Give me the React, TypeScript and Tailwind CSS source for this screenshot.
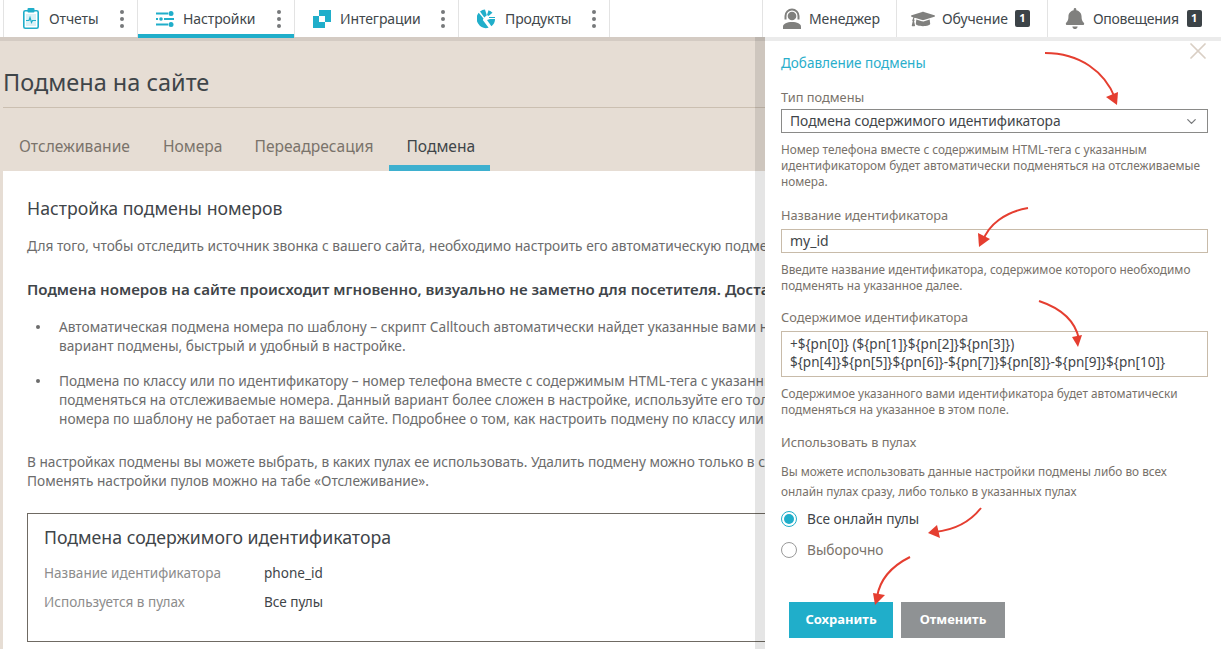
import React from 'react';
import { ChevronDown, X } from 'lucide-react';
import { FaBell, FaGraduationCap } from 'react-icons/fa';

const ReportIcon = () => (
  <svg width="16" height="21" viewBox="0 0 16 21" fill="none">
    <rect x="0.8" y="2.8" width="14.4" height="17.4" rx="1.5" stroke="#20aeca" strokeWidth="1.6" />
    <rect x="4.5" y="0" width="7" height="4.5" rx="1" fill="#20aeca" />
    <rect x="3" y="6" width="10" height="12" fill="#d9f1f6" />
    <path d="M3 12.5h3l1-3 1.500 5 1-2h3.500" stroke="#20aeca" strokeWidth="1.2" />
  </svg>
);

const SettingsIcon = () => (
  <svg width="18" height="16" viewBox="0 0 18 16" fill="#20aeca">
    <rect x="0" y="1.500" width="12" height="2" />
    <circle cx="15" cy="2.500" r="2.500" />
    <rect x="0" y="7" width="2" height="2" />
    <circle cx="5" cy="8" r="1.800" />
    <rect x="8" y="7" width="10" height="2" />
    <rect x="0" y="12.500" width="12" height="2" />
    <circle cx="15" cy="13.500" r="2.500" />
  </svg>
);

const IntegrationIcon = () => (
  <svg width="18" height="18" viewBox="0 0 18 18" fill="#20aeca">
    <path d="M6 0h12v12h-6V6H6z" />
    <path d="M0 6h6v6h6v6H0z" />
  </svg>
);

const ProductIcon = () => (
  <svg width="18" height="20" viewBox="0 0 18 20" fill="#20aeca">
    <path d="M3 2.500A9.500 9.500 0 0 1 8 .6l1.800 5.600-2.500 2.300z" />
    <path d="M1.700 3.800 6.500 9.400 5.800 11l5.800 7.800A9.500 9.500 0 0 1 1.700 3.800z" />
    <path d="M11.500 1.200a9 9 0 0 1 4 2.500l-4 3.300-1.500-1z" />
    <path d="M13 10h5a9 9 0 0 1-3.600 7.300L10 11z" />
    <rect x="12" y="8" width="6" height="1" />
  </svg>
);

const ManagerIcon = () => (
  <svg width="20" height="21" viewBox="0 0 20 21" fill="#80807e">
    <path d="M2.500 8a7.500 7.500 0 0 1 15 0v3.500h-2V8a5.500 5.500 0 0 0-11 0v3.500h-2z" />
    <circle cx="10" cy="8" r="4.300" />
    <path d="M1 21v-2.500C1 16 5 14 10 14s9 2 9 4.500V21z" />
  </svg>
);

const navLeft = [
  { label: 'Отчеты', width: 'w-[134px]', pad: 'pl-[19px]', gap: 'gap-[10px]', icon: <ReportIcon />, active: false },
  { label: 'Настройки', width: 'w-[157px]', pad: 'pl-[18px]', gap: 'gap-[9px]', icon: <SettingsIcon />, active: true },
  { label: 'Интеграции', width: 'w-[164px]', pad: 'pl-[18px]', gap: 'gap-[9px]', icon: <IntegrationIcon />, active: false },
  { label: 'Продукты', width: 'w-[151px]', pad: 'pl-[18px]', gap: 'gap-[10px]', icon: <ProductIcon />, active: false },
];

const NavDots = () => (
  <div className="ml-auto mr-[13px] flex flex-col gap-[3px]">
    <span className="h-[4px] w-[4px] rounded-full bg-[#77797b]" />
    <span className="h-[4px] w-[4px] rounded-full bg-[#77797b]" />
    <span className="h-[4px] w-[4px] rounded-full bg-[#77797b]" />
  </div>
);

const Badge = () => (
  <span className="flex h-[17px] w-[15px] items-center justify-center rounded-[2px] bg-[#3c4347] text-[11px] font-bold text-white">1</span>
);

const Navbar = () => (
  <nav className="flex h-[37px] bg-white text-[14px] text-[#41474b]">
    <div className="flex pl-[3px]">
      {navLeft.map((item) => (
        <div
          key={item.label}
          className={`relative flex items-center border-l border-[#e3e3e3] ${item.width} ${item.pad} ${item.gap}`}
        >
          {item.icon}
          <span className="tracking-[-0.1px]">{item.label}</span>
          <NavDots />
          {item.active && <span className="absolute bottom-[-1px] left-0 right-0 z-10 h-[4px] bg-[#20aeca]" />}
        </div>
      ))}
      <div className="border-l border-[#e3e3e3]" />
    </div>
    <div className="ml-auto flex">
      <div className="flex w-[134px] items-center gap-[7px] border-l border-[#e3e3e3] pl-[19px]">
        <ManagerIcon />
        <span className="tracking-[-0.1px]">Менеджер</span>
      </div>
      <div className="flex w-[151px] items-center gap-[7px] border-l border-[#e3e3e3] pl-[14px]">
        <FaGraduationCap className="h-[24px] w-[24px] text-[#80807e]" />
        <span className="tracking-[-0.1px]">Обучение</span>
        <Badge />
      </div>
      <div className="flex w-[174px] items-center gap-[8px] border-l border-[#e3e3e3] pl-[17px]">
        <FaBell className="h-[21px] w-[20px] text-[#80807e]" />
        <span className="tracking-[-0.3px]">Оповещения</span>
        <Badge />
      </div>
    </div>
  </nav>
);

const Bullet = () => (
  <span className="absolute left-[-23px] top-[8px] h-[4px] w-[4px] rounded-full bg-[#6c6c6c]" />
);

const PageContent = () => (
  <div className="relative w-[765px] shrink-0 overflow-hidden bg-[#e6ddd4]">
    <div className="ml-[3px]">
      <h1 className="mt-[29px] h-[41px] text-[23.5px] leading-[32px] text-[#3f4549]">Подмена на сайте</h1>
    </div>
    <div className="ml-[3px] border-t border-[#cbbfb1]" />
    <div className="ml-[3px] mt-[18px] flex h-[45px] text-[15.6px] text-[#7a736b]">
      <span className="ml-[16px] mt-[9px]">Отслеживание</span>
      <span className="ml-[33px] mt-[9px]">Номера</span>
      <span className="ml-[32px] mt-[9px]">Переадресация</span>
      <span className="relative ml-[16px] h-[45px] w-[101px] pl-[17px] pt-[9px] text-[#3f4549]">
        Подмена
        <span className="absolute bottom-0 left-0 right-0 h-[6px] bg-[#3eb0cf]" />
      </span>
    </div>
    <div className="ml-[3px] h-[500px] w-[1000px] bg-white pl-[24px] pt-[26px] text-[13.7px] leading-[19px] text-[#6c6c6c]">
      <h2 className="text-[17.7px] leading-[22px] text-[#3f4549]">Настройка подмены номеров</h2>
      <p className="mt-[17px] whitespace-nowrap">Для того, чтобы отследить источник звонка с вашего сайта, необходимо настроить его автоматическую подмену</p>
      <p className="mt-[25px] whitespace-nowrap text-[15.1px] font-semibold text-[#3f4549]">Подмена номеров на сайте происходит мгновенно, визуально не заметно для посетителя. Достаточно</p>
      <ul className="mt-[18px] pl-[32px]">
        <li className="relative whitespace-nowrap">
          <Bullet />
          Автоматическая подмена номера по шаблону – скрипт Calltouch автоматически найдет указанные вами номера<br />
          вариант подмены, быстрый и удобный в настройке.
        </li>
        <li className="relative mt-[16px] whitespace-nowrap">
          <Bullet />
          Подмена по классу или по идентификатору – номер телефона вместе с содержимым HTML-тега с указанным<br />
          подменяться на отслеживаемые номера. Данный вариант более сложен в настройке, используйте его только<br />
          номера по шаблону не работает на вашем сайте. Подробнее о том, как настроить подмену по классу или
        </li>
      </ul>
      <p className="mt-[24px] whitespace-nowrap">
        В настройках подмены вы можете выбрать, в каких пулах ее использовать. Удалить подмену можно только в случае<br />
        Поменять настройки пулов можно на табе «Отслеживание».
      </p>
      <div className="mt-[23px] h-[129px] w-[900px] border border-[#6f6a63] pl-[16px] pt-[12px]">
        <h3 className="text-[17.7px] leading-[22px] text-[#3f4549]">Подмена содержимого идентификатора</h3>
        <div className="mt-[16px] flex h-[29px] text-[13.55px]">
          <span className="w-[220px] text-[#8c8c8c]">Название идентификатора</span>
          <span className="text-[#3f4549]">phone_id</span>
        </div>
        <div className="flex text-[13.55px]">
          <span className="w-[220px] text-[#8c8c8c]">Используется в пулах</span>
          <span className="text-[#3f4549]">Все пулы</span>
        </div>
      </div>
    </div>
    <div className="absolute bottom-0 right-0 top-0 w-[10px] bg-black/10" />
  </div>
);

const Help = ({ children, className }: { children: React.ReactNode; className: string }) => (
  <p className={`text-[11.8px] leading-[16px] text-[#77716a] ${className}`}>{children}</p>
);

const Label = ({ children, className }: { children: React.ReactNode; className: string }) => (
  <div className={`text-[12.8px] leading-[18px] text-[#7a736b] ${className}`}>{children}</div>
);

const SidePanel = () => (
  <div className="relative flex-1 bg-white pl-[16px] pr-[13px]">
    <X className="absolute right-[9px] top-0 h-[28px] w-[28px] text-[#d9cfc4]" strokeWidth={1.5} />
    <div className="mt-[17px] text-[13.5px] leading-[18px] text-[#29aecb]">Добавление подмены</div>
    <Label className="mt-[16px]">Тип подмены</Label>
    <div className="mt-[3px] flex h-[24px] items-center justify-between border border-[#8a8a88] pl-[8px] pr-[8px] text-[13.8px] text-[#3f4549]">
      <span>Подмена содержимого идентификатора</span>
      <ChevronDown className="h-[15px] w-[15px] text-[#77797b]" />
    </div>
    <Help className="mt-[8px]">
      Номер телефона вместе с содержимым HTML-тега с указанным<br />
      идентификатором будет автоматически подменяться на отслеживаемые<br />
      номера.
    </Help>
    <Label className="mt-[17px]">Название идентификатора</Label>
    <div className="mt-[5px] flex h-[24px] items-center border border-[#c8bba9] pb-[2px] pl-[8px] text-[14px] text-[#3f4549]">my_id</div>
    <Help className="mt-[8px]">
      Введите название идентификатора, содержимое которого необходимо<br />
      подменять на указанное далее.
    </Help>
    <Label className="mt-[15px]">Содержимое идентификатора</Label>
    <div className="mt-[5px] h-[46px] border border-[#c8bba9] pl-[8px] pt-[3px] text-[13.5px] leading-[18px] text-[#3f4549]">
      {'+${pn[0]} (${pn[1]}${pn[2]}${pn[3]})'}<br />
      {'${pn[4]}${pn[5]}${pn[6]}-${pn[7]}${pn[8]}-${pn[9]}${pn[10]}'}
    </div>
    <Help className="mt-[8px]">
      Содержимое указанного вами идентификатора будет автоматически<br />
      подменяться на указанное в этом поле.
    </Help>
    <Label className="mt-[16px]">Использовать в пулах</Label>
    <p className="mt-[10px] text-[11.8px] leading-[20px] text-[#77716a]">
      Вы можете использовать данные настройки подмены либо во всех<br />
      онлайн пулах сразу, либо только в указанных пулах
    </p>
    <div className="mt-[9px] flex h-[18px] items-center gap-[10px]">
      <span className="flex h-[16px] w-[16px] items-center justify-center rounded-full border border-[#20aeca]">
        <span className="h-[10px] w-[10px] rounded-full bg-[#20aeca]" />
      </span>
      <span className="text-[13.7px] text-[#3f4549]">Все онлайн пулы</span>
    </div>
    <div className="mt-[13px] flex h-[18px] items-center gap-[10px]">
      <span className="h-[16px] w-[16px] rounded-full border border-[#9a9a9a]" />
      <span className="text-[13.7px] text-[#7a736b]">Выборочно</span>
    </div>
    <div className="ml-[8px] mt-[43px] flex gap-[8px] text-[13px] font-bold text-white">
      <button className="h-[36px] w-[104px] bg-[#20aeca]">Сохранить</button>
      <button className="h-[36px] w-[104px] bg-[#8f9294]">Отменить</button>
    </div>
  </div>
);

const RedArrow = ({ line, head }: { line: string; head: string }) => (
  <g>
    <path d={line} fill="none" stroke="#e53e30" strokeWidth="2" />
    <path d={head} fill="#e53e30" />
  </g>
);

const Arrows = () => (
  <svg className="pointer-events-none absolute left-0 top-0" width="1221" height="649" viewBox="0 0 1221 649">
    <RedArrow line="M1045 53C1080 53 1105 72 1115 98" head="M1117 105L1106 97L1118 92z" />
    <RedArrow line="M1028 208C1005 212 988 225 983 241" head="M979 247L990 239L978 233z" />
    <RedArrow line="M1039 301C1060 308 1075 320 1079 339" head="M1078 347L1072 337L1082 335z" />
    <RedArrow line="M981 508C970 522 955 530 935 532" head="M928 533L940 538L937 525z" />
    <RedArrow line="M910 557C892 566 880 578 877 597" head="M875 605L873 593L885 595z" />
  </svg>
);

const App: React.FC = () => (
  <div className="relative h-[649px] w-full overflow-hidden bg-white font-['Noto_Sans',sans-serif]">
    <Navbar />
    <div className="relative flex h-[612px]">
      <PageContent />
      <SidePanel />
      <div className="absolute left-0 right-0 top-0 h-[4px] bg-black/[0.08]" />
    </div>
    <Arrows />
  </div>
);

export default App;
